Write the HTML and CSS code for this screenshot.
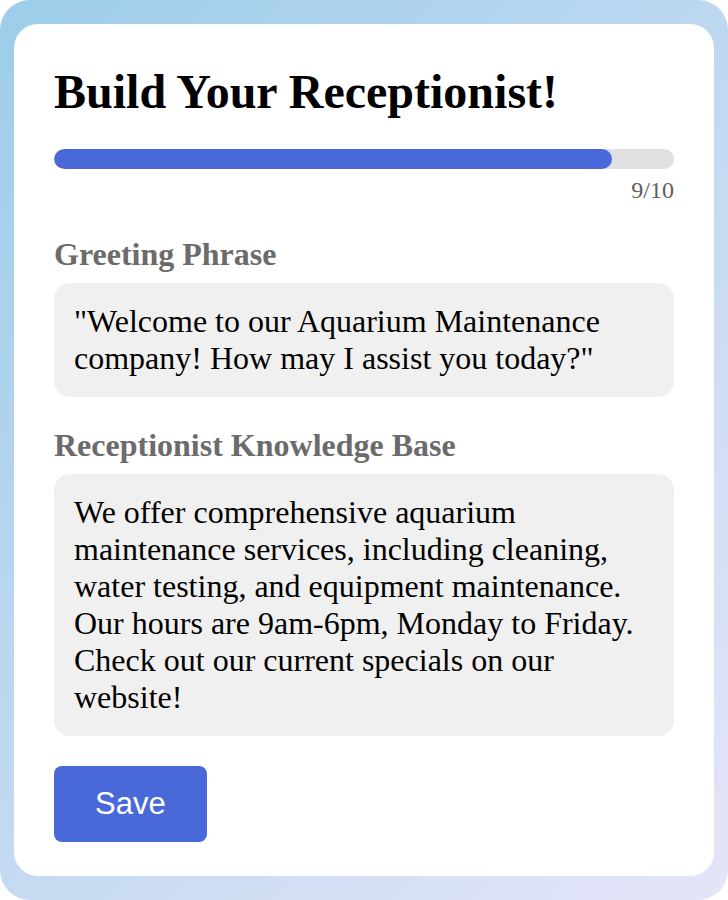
FILE: index.html
```html
<!DOCTYPE html>
<html lang="en">
<head>
<meta charset="utf-8">
<title>Build Your Receptionist!</title>
<link rel="stylesheet" href="styles.css">
</head>
<body>
<div class="frame">
  <main class="card">
    <h1 class="title">Build Your Receptionist!</h1>
    <div class="progress"><div class="progress-fill" style="width: 90%"></div></div>
    <div class="progress-count">9/10</div>

    <h2 class="label label-first">Greeting Phrase</h2>
    <div class="field">"Welcome to our Aquarium Maintenance company! How may I assist you today?"</div>

    <h2 class="label label-second">Receptionist Knowledge Base</h2>
    <div class="field field-second">We offer comprehensive aquarium maintenance services, including cleaning, water testing, and equipment maintenance. Our hours are 9am-6pm, Monday to Friday. Check out our current specials on our website!</div>

    <button class="save" type="button">Save</button>
  </main>
</div>
</body>
</html>
```

FILE: styles.css
```css
html, body {
  margin: 0;
  padding: 0;
}

body {
  width: 728px;
  height: 900px;
  font-family: "Liberation Serif", "Times New Roman", serif;
  color: #000;
}

.frame {
  box-sizing: border-box;
  width: 728px;
  height: 900px;
  padding: 24px 14px;
  border-radius: 30px;
  background: linear-gradient(135deg, #9ccdea 0%, #e6e5f8 100%);
  display: flex;
}

.card {
  flex: 1;
  box-sizing: border-box;
  background: #ffffff;
  border-radius: 24px;
  padding: 40px 40px 0;
  display: flex;
  flex-direction: column;
  align-items: stretch;
}

.title {
  margin: 0;
  font-size: 48px;
  font-weight: bold;
  line-height: normal;
}

.progress {
  margin-top: 30px;
  height: 20px;
  border-radius: 10px;
  background: #e0e0e0;
  overflow: hidden;
}

.progress-fill {
  height: 100%;
  border-radius: 10px;
  background: #4a69d9;
}

.progress-count {
  margin-top: 8px;
  text-align: right;
  font-size: 24px;
  line-height: normal;
  color: #5f5f5f;
}

.label {
  margin: 0;
  font-size: 32px;
  font-weight: bold;
  line-height: normal;
  color: #6b6b6b;
}

.label-first {
  margin-top: 32px;
}

.label-second {
  margin-top: 30px;
}

.field {
  margin-top: 10px;
  padding: 20px;
  border-radius: 16px;
  background: #f0f0f0;
  font-size: 32px;
  line-height: normal;
}

.field-second {
  margin-top: 10px;
}

.save {
  align-self: flex-start;
  margin-top: 30px;
  padding: 20px 41px;
  border: none;
  border-radius: 8px;
  background: #4a69d9;
  color: #ffffff;
  font-family: "Liberation Sans", Arial, sans-serif;
  font-size: 31px;
  line-height: normal;
  cursor: pointer;
}
```
